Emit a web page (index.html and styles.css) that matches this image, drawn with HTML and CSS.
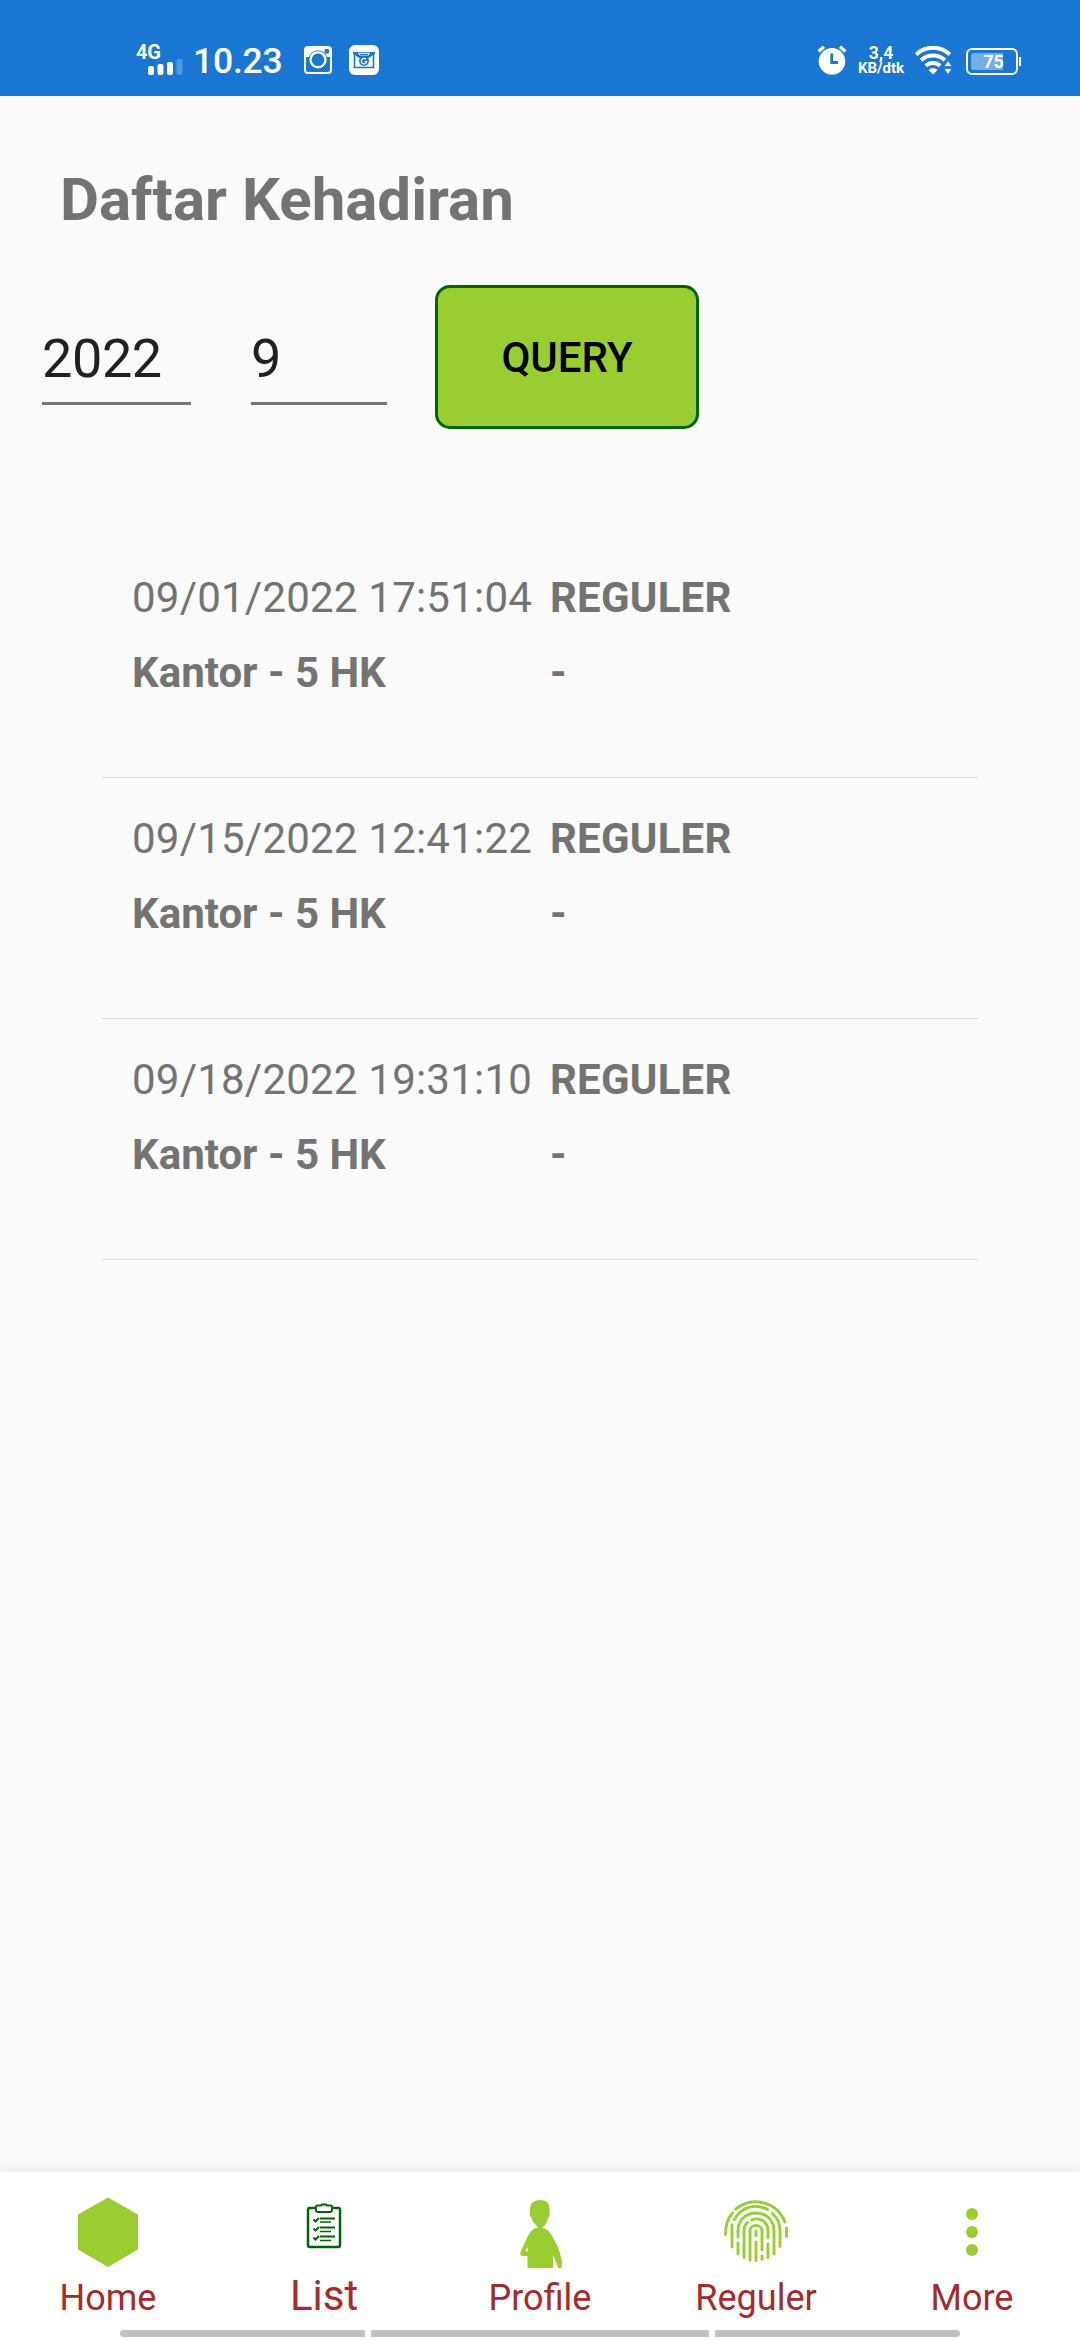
FILE: index.html
```html
<!DOCTYPE html>
<html lang="id">
<head>
    <meta charset="utf-8">
    <meta name="viewport" content="width=device-width,initial-scale=1">
    <title>Daftar Kehadiran</title>
    <link rel="stylesheet" href="styles.css">
</head>
<body>
    <div class="status-bar">
        <div class="status-left">
            <div class="network">
                <span class="network-type">4G</span>
                <svg class="signal" width="35" height="16" viewBox="0 0 35 16" fill="#fff">
                    <rect x="0" y="7" width="6" height="9" rx="2"/>
                    <rect x="9.5" y="5" width="6" height="11" rx="2"/>
                    <rect x="19" y="3" width="6" height="13" rx="2"/>
                    <rect x="28.5" y="0" width="6" height="16" rx="2" opacity=".25"/>
                </svg>
            </div>
            <span class="time">10.23</span>
            <svg class="icon-camera" width="28" height="28" viewBox="0 0 28 28">
                <path d="M1 1H27V11H1Z" fill="#fff"/>
                <circle cx="14" cy="13.7" r="9.4" fill="#1976d2"/>
                <rect x="1" y="1" width="26" height="26" rx="3" fill="none" stroke="#fff" stroke-width="2"/>
                <circle cx="14" cy="13.7" r="7.5" fill="#1976d2" stroke="#fff" stroke-width="2.4"/>
                <rect x="20.5" y="3" width="4.5" height="4.5" rx="1" fill="#1976d2"/>
            </svg>
            <svg class="icon-mail" width="30" height="30" viewBox="0 0 30 30">
                <rect width="30" height="30" rx="6" fill="#fff"/>
                <path d="M4 7H26V8.500L20 13H10L4 8.500Z" fill="#1976d2"/>
                <path d="M9 7.800H21L19 11H11Z" fill="#fff"/>
                <path d="M11 9.800H19" stroke="#1976d2" stroke-width="1.500"/>
                <path d="M5.500 9V22.500H24.500V9" fill="none" stroke="#1976d2" stroke-width="1.600"/>
                <circle cx="15" cy="16" r="5" fill="#1976d2"/>
                <path d="M17 14.300A2.700 2.700 0 1 0 17.700 16.500H15.300" fill="none" stroke="#fff" stroke-width="1.200"/>
            </svg>
        </div>
        <div class="status-right">
            <svg class="icon-alarm" width="30" height="30" viewBox="0 0 30 30">
                <circle cx="15" cy="16.300" r="13.300" fill="#fff"/>
                <path d="M1.500 6.500L7 1.800M28.500 6.500L23 1.800" stroke="#fff" stroke-width="3.200"/>
                <path d="M14.700 8.500V17.500H21" fill="none" stroke="#1976d2" stroke-width="2.800"/>
            </svg>
            <div class="speed">
                <span class="speed-value">3,4</span>
                <span class="speed-unit">KB/dtk</span>
            </div>
            <svg class="icon-wifi" width="37" height="30" viewBox="0 0 37 30">
                <g fill="none" stroke="#fff" stroke-width="4">
                    <path d="M1.200 9.500A24 24 0 0 1 34.800 9.500"/>
                    <path d="M6.200 15.200A17 17 0 0 1 29.800 15.200"/>
                    <path d="M10.800 20.800A10.500 10.500 0 0 1 25.200 20.800"/>
                </g>
                <path d="M13.500 25Q18 21 22.500 25L18 29.500Z" fill="#fff"/>
                <path d="M29 21.500L33 15.500L37 21.500ZM29 23.500H37L33 29.500Z" fill="#fff" stroke="#1976d2" stroke-width=".8"/>
            </svg>
            <div class="battery">
                <div class="battery-body">
                    <div class="battery-level" style="width: 75%"></div>
                    <span class="battery-text">75</span>
                </div>
                <div class="battery-tip"></div>
            </div>
        </div>
    </div>

    <div class="content">
        <h1>Daftar Kehadiran</h1>
        <div class="filter">
            <div class="field field-year">2022</div>
            <div class="field field-month">9</div>
            <button class="query-btn">QUERY</button>
        </div>
        <ul class="attendance-list">
            <li class="attendance-item">
                <span class="date">09/01/2022 17:51:04</span>
                <b class="type">REGULER</b>
                <b>Kantor - 5 HK</b>
                <b>-</b>
            </li>
            <li class="attendance-item">
                <span class="date">09/15/2022 12:41:22</span>
                <b class="type">REGULER</b>
                <b>Kantor - 5 HK</b>
                <b>-</b>
            </li>
            <li class="attendance-item">
                <span class="date">09/18/2022 19:31:10</span>
                <b class="type">REGULER</b>
                <b>Kantor - 5 HK</b>
                <b>-</b>
            </li>
        </ul>
    </div>

    <div class="bottom-nav">
        <div class="tabs">
            <a class="tab">
                <svg width="72" height="72" viewBox="0 0 72 72">
                    <path d="M36 1.500L66 18.500V53.500L36 71L6 53.500V18.500Z" fill="#9acd32"/>
                </svg>
                <span>Home</span>
            </a>
            <a class="tab active">
                <svg width="72" height="72" viewBox="0 0 72 72" fill="none" stroke="#006400">
                    <path d="M27 12H21.500Q20 12 20 13.500V49Q20 51 22 51H50Q52 51 52 49V13.500Q52 12 50.500 12H45" stroke-width="2.500"/>
                    <path d="M28 10.500Q28 9.500 29.500 9.500H32.500Q33.500 9.500 34 8.500H38Q38.500 9.500 39.500 9.500H42.500Q44 9.500 44 10.500V14Q44 16 42 16H30Q28 16 28 14Z" stroke-width="1.900"/>
                    <path d="M32 22.500H47M32 31.500H47M32 40.500H47" stroke-width="2.200"/>
                    <path d="M32 26H43M32 35.500H43M32 44.500H43" stroke-width="1.700"/>
                    <path d="M25.500 23.500L27.500 25.500L31 22M25.500 32.500L27.500 34.500L31 31M25.500 41.500L27.500 43.500L31 40" stroke-width="2"/>
                </svg>
                <span>List</span>
            </a>
            <a class="tab">
                <svg width="72" height="72" viewBox="0 0 72 72" fill="#9acd32">
                    <path d="M32.500 4.500Q35.500 3.500 40 4.500Q45 6 45.500 12V17Q46.500 18 45.500 20L44.500 21Q43.500 26 41 29Q39 31 38.500 32Q44 33 47 38L53.500 50Q56 56 58 66L57.500 72H54L50.500 62L49 59V72H23.500V60H18Q15.500 59 16.500 56L22 44Q25.500 36 29 33.500Q31 32 34 31.500Q33 30.500 31 28Q28 25 27 21L26 20Q25 18 26 17V12Q26.500 6 32.500 4.500Z"/>
                    <path d="M23.500 51.500V56L21.500 55Z" fill="#fff"/>
                </svg>
                <span>Profile</span>
            </a>
            <a class="tab">
                <svg width="72" height="72" viewBox="0 0 72 72" fill="none" stroke="#9acd32" stroke-width="2.900" stroke-linecap="round">
                    <path d="M15.800 13.200A31 31 0 0 1 64.800 26"/>
                    <path d="M66.500 32V40.500"/>
                    <path d="M5.500 38.500C5.500 28 8.500 21.500 12.500 17"/>
                    <path d="M12 51V34V29"/>
                    <path d="M14.500 23.500C22 10 36 7.500 47.500 13.500"/>
                    <path d="M52.500 17.500C57.500 22 60 27 60 35V50.500"/>
                    <path d="M18 41V35C18 11 54 11 54 35V58"/>
                    <path d="M18 47V58"/>
                    <path d="M24 61.500V35Q24 29.500 27.500 26.500"/>
                    <path d="M31.500 24C40 20.500 48 26 48 35V42"/>
                    <path d="M48 48V61.500"/>
                    <path d="M30 64V35C30 27.500 42 27.500 42 35V54"/>
                    <path d="M42 60V63.500"/>
                    <path d="M36 35V40M36 46V64.500"/>
                </svg>
                <span>Reguler</span>
            </a>
            <a class="tab">
                <svg width="72" height="72" viewBox="0 0 72 72" fill="#9acd32">
                    <circle cx="36" cy="18" r="6"/>
                    <circle cx="36" cy="36" r="6"/>
                    <circle cx="36" cy="54" r="6"/>
                </svg>
                <span>More</span>
            </a>
        </div>
        <div class="gesture-bar">
            <div class="gesture gesture-start"></div>
            <div class="gesture gesture-middle"></div>
            <div class="gesture gesture-end"></div>
        </div>
    </div>
</body>
</html>
```
FILE: styles.css
```css
* {
    margin: 0;
    padding: 0;
    box-sizing: border-box;
}

body {
    background: #fafafa;
    color: #737373;
    font-family: Roboto, sans-serif;
    height: 2340px;
    display: flex;
    flex-direction: column;
    overflow: hidden;
}

svg {
    display: block;
    flex: none;
}

/* status bar */
.status-bar {
    height: 96px;
    padding: 45px 59px 0 136px;
    background: #1976d2;
    color: #fff;
    display: flex;
    justify-content: space-between;
}

.status-left,
.status-right {
    display: flex;
    align-items: flex-start;
}

.network {
    width: 57px;
}

.network-type {
    display: block;
    height: 14px;
    font-size: 20px;
    font-weight: 700;
    line-height: 15px;
    letter-spacing: -0.3px;
}

.signal {
    margin-left: 12px;
}

.time {
    width: 111px;
    font-size: 35.5px;
    font-weight: 500;
    line-height: 33px;
    letter-spacing: -0.2px;
}

.icon-camera {
    margin: 1px 17px 0 0;
}

.speed {
    width: 68px;
    display: flex;
    flex-direction: column;
    align-items: center;
    font-weight: 700;
}

.speed-value {
    font-size: 17.5px;
    line-height: 16px;
}

.speed-unit {
    font-size: 15px;
    line-height: 15px;
}

.icon-wifi {
    margin-right: 14px;
}

.battery {
    display: flex;
    align-items: center;
    gap: 1px;
    margin-top: 3px;
}

.battery-body {
    position: relative;
    width: 52px;
    height: 27px;
    padding: 3px;
    border: 2px solid #fff;
    border-radius: 6px;
}

.battery-level {
    height: 100%;
    border-radius: 3px 0 0 3px;
    background: #75ade4;
}

.battery-text {
    position: absolute;
    inset: 0;
    text-align: center;
    font-size: 18px;
    font-weight: 700;
    line-height: 24px;
    padding-left: 3px;
}

.battery-tip {
    width: 2px;
    height: 9px;
    background: #fff;
}

/* content */
.content {
    flex: 1;
    padding-top: 69px;
}

h1 {
    margin-left: 60px;
    font-size: 60px;
    font-weight: 700;
    line-height: 70px;
}

.filter {
    display: flex;
    margin: 50px 0 0 42px;
}

.field {
    height: 120px;
    padding-top: 42px;
    border-bottom: 3px solid #757575;
    color: #212121;
    font-size: 54px;
    line-height: 64px;
    letter-spacing: -0.4px;
}

.field-year {
    width: 149px;
    margin-right: 60px;
}

.field-month {
    width: 136px;
    margin-right: 48px;
}

.query-btn {
    width: 264px;
    height: 144px;
    padding-top: 1px;
    border: 3px solid #006400;
    border-radius: 15px;
    background: #9acd32;
    color: #000;
    font-family: inherit;
    font-size: 42px;
    font-weight: 500;
}

.attendance-list {
    margin: 108px 102px 0;
    list-style: none;
}

.attendance-item {
    height: 241px;
    padding: 36px 30px 0;
    border-bottom: 1px solid #d9d9d9;
    display: grid;
    grid-template-columns: 418px 1fr;
    grid-auto-rows: 50px;
    row-gap: 25px;
    align-content: start;
    font-size: 42px;
    line-height: 50px;
    white-space: nowrap;
}

.date {
    letter-spacing: 0.22px;
}

.type {
    letter-spacing: 0.2px;
}

/* bottom navigation */
.bottom-nav {
    height: 168px;
    background: #fff;
    box-shadow: 0 -2px 12px rgba(0, 0, 0, 0.08);
}

.tabs {
    height: 158px;
    display: grid;
    grid-template-columns: repeat(5, 1fr);
}

.tab {
    padding-top: 24px;
    display: flex;
    flex-direction: column;
    align-items: center;
    color: #a52a2a;
    font-size: 36px;
    line-height: 42px;
}

.tab span {
    margin-top: 9px;
}

.tab.active {
    font-size: 42px;
}

.tab.active span {
    margin-top: 7px;
}

.gesture-bar {
    display: flex;
    gap: 6px;
    margin: 0 120px;
}

.gesture {
    height: 7px;
    background: #c0c0c0;
}

.gesture-start {
    width: 245px;
    border-radius: 4px 0 0 4px;
}

.gesture-middle {
    width: 338px;
}

.gesture-end {
    width: 245px;
    border-radius: 0 4px 4px 0;
}
```
